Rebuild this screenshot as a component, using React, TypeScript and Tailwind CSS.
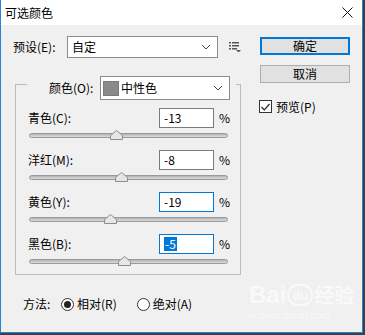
import React from "react";

const FONT = { fontFamily: '"Noto Sans CJK SC", "Noto Sans", sans-serif' };

const rows = [
  { label: "青色(C):", value: -13, focused: false, selected: false },
  { label: "洋红(M):", value: -8, focused: false, selected: false },
  { label: "黄色(Y):", value: -19, focused: true, selected: false },
  { label: "黑色(B):", value: -5, focused: true, selected: true },
];

function Chevron() {
  return (
    <svg width="10" height="6" viewBox="0 0 10 6" className="shrink-0">
      <path d="M1 1 L5 5 L9 1" fill="none" stroke="#444" strokeWidth="1" />
    </svg>
  );
}

function Thumb() {
  return (
    <svg width="13" height="10" viewBox="0 0 13 10">
      <path
        d="M0.5 9.5 L0.5 5.5 L6.5 0.5 L12.5 5.5 L12.5 9.5 Z"
        fill="#e6e6e6"
        stroke="#8d8d8d"
        strokeWidth="1"
      />
    </svg>
  );
}

function Slider({ value }: { value: number }) {
  const pos = ((value + 100) / 200) * 199;
  return (
    <div className="relative ml-[13px] mt-[5px] h-[5px] w-[199px] rounded-full border border-[#9a9a9a] bg-gradient-to-b from-[#b4b4b4] to-[#dcdcdc]">
      <div className="absolute top-[-4px]" style={{ left: pos - 7 }}>
        <Thumb />
      </div>
    </div>
  );
}

function Row({
  label,
  value,
  focused,
  selected,
  first,
}: {
  label: string;
  value: number;
  focused: boolean;
  selected: boolean;
  first: boolean;
}) {
  return (
    <div className={first ? "mt-[8px]" : "mt-[12px]"}>
      <div className="flex h-[20px] items-center pr-[10px]">
        <div className="flex-1 pl-[12px]">{label}</div>
        <div
          className={
            "flex h-[20px] w-[55px] items-center bg-white pl-[4px] border " +
            (focused ? "border-[#0078d7]" : "border-[#7a7a7a]")
          }
        >
          {selected ? (
            <span className="bg-[#0078d7] px-[1px] text-white leading-[14px]">{value}</span>
          ) : (
            <span>{value}</span>
          )}
        </div>
        <div className="ml-[5px] w-[11px]">%</div>
      </div>
      <Slider value={value} />
    </div>
  );
}

export default function App() {
  return (
    <div className="h-[335px] w-[365px] overflow-hidden bg-[#3a3f48]" style={FONT}>
      <div className="relative flex h-[333px] w-[363px] flex-col border-x border-b border-[#2a82d6] bg-[#f0f0f0] text-[12px] leading-none text-black">
        {/* title bar */}
        <div className="flex h-[25px] items-center justify-between bg-white pl-[4px] pr-[9px]">
          <span className="text-[12px]">可选颜色</span>
          <svg width="11" height="11" viewBox="0 0 11 11">
            <path d="M0.5 0.5 L10.5 10.5 M10.5 0.5 L0.5 10.5" stroke="#111" strokeWidth="1" />
          </svg>
        </div>

        <div className="flex flex-1">
          {/* left column */}
          <div className="w-[240px]">
            <div className="ml-[12px] mt-[11px] flex items-center">
              <div className="w-[54px]">预设(E):</div>
              <div className="flex h-[22px] w-[151px] items-center justify-between border border-[#8c8c8c] bg-white pl-[4px] pr-[6px]">
                <span>自定</span>
                <Chevron />
              </div>
              <svg width="12" height="10" viewBox="0 0 12 10" className="ml-[11px]">
                <g fill="#555">
                  <rect x="0" y="0" width="2" height="1.5" />
                  <rect x="3" y="0" width="7" height="1.5" />
                  <rect x="0" y="3" width="2" height="1.5" />
                  <rect x="3" y="3" width="7" height="1.5" />
                  <rect x="0" y="6" width="2" height="1.5" />
                  <rect x="3" y="6" width="5" height="1.5" />
                  <path d="M7 8 L12 8 L9.5 10.5 Z" />
                </g>
              </svg>
            </div>

            {/* group box */}
            <div className="ml-[14px] mt-[26px] h-[191px] w-[226px] border border-[#bdbdbd]">
              <div className="ml-[11px] mt-[-9px] flex h-[24px] w-[209px] items-center bg-[#f0f0f0] pl-[22px]">
                <div className="w-[51px]">颜色(O):</div>
                <div className="flex h-[24px] w-[130px] items-center border border-[#8c8c8c] bg-white pl-[2px] pr-[6px]">
                  <div className="h-[15px] w-[16px] border border-[#7a7a7a] bg-[#8a8a8a]" />
                  <span className="ml-[2px] flex-1">中性色</span>
                  <Chevron />
                </div>
              </div>
              {rows.map((r, i) => (
                <Row key={r.label} {...r} first={i === 0} />
              ))}
            </div>

            <div className="ml-[22px] mt-[21px] flex h-[16px] items-center">
              <span className="w-[38px]">方法:</span>
              <div className="flex h-[13px] w-[13px] items-center justify-center rounded-full border border-[#333] bg-white">
                <div className="h-[7px] w-[7px] rounded-full bg-[#222]" />
              </div>
              <span className="ml-[3px]">相对(R)</span>
              <div className="ml-[20px] h-[13px] w-[13px] rounded-full border border-[#333] bg-white" />
              <span className="ml-[3px]">绝对(A)</span>
            </div>
          </div>

          {/* right column */}
          <div className="ml-[19px] flex flex-col pt-[12px]">
            <div className="flex h-[18px] w-[90px] items-center justify-center border-2 border-[#0078d7] bg-[#e1e1e1]">
              确定
            </div>
            <div className="mt-[10px] flex h-[18px] w-[90px] items-center justify-center border border-[#adadad] bg-[#e1e1e1]">
              取消
            </div>
            <div className="mt-[17px] ml-[-1px] flex items-center">
              <div className="flex h-[13px] w-[13px] items-center justify-center border border-[#333] bg-white">
                <svg width="9" height="8" viewBox="0 0 9 8">
                  <path d="M0.5 4 L3.3 6.8 L8.5 1" fill="none" stroke="#222" strokeWidth="1.2" />
                </svg>
              </div>
              <span className="ml-[4px]">预览(P)</span>
            </div>
          </div>
        </div>

        {/* watermark */}
        <div className="pointer-events-none absolute left-[248px] top-[283px] flex flex-col items-start text-white opacity-60">
          <div className="flex items-center text-[24px] font-bold leading-none" style={{ fontFamily: '"Liberation Sans", sans-serif' }}>
            <span>Bai</span>
            <span className="mx-[1px] flex h-[22px] w-[26px] items-center justify-center rounded-full border-2 border-white text-[13px]">du</span>
            <span className="text-[20px]" style={FONT}>经验</span>
          </div>
          <span className="mt-[4px] text-[10px]" style={{ fontFamily: '"Liberation Sans", sans-serif' }}>
            jingyan.baidu.com
          </span>
        </div>
      </div>
    </div>
  );
}
